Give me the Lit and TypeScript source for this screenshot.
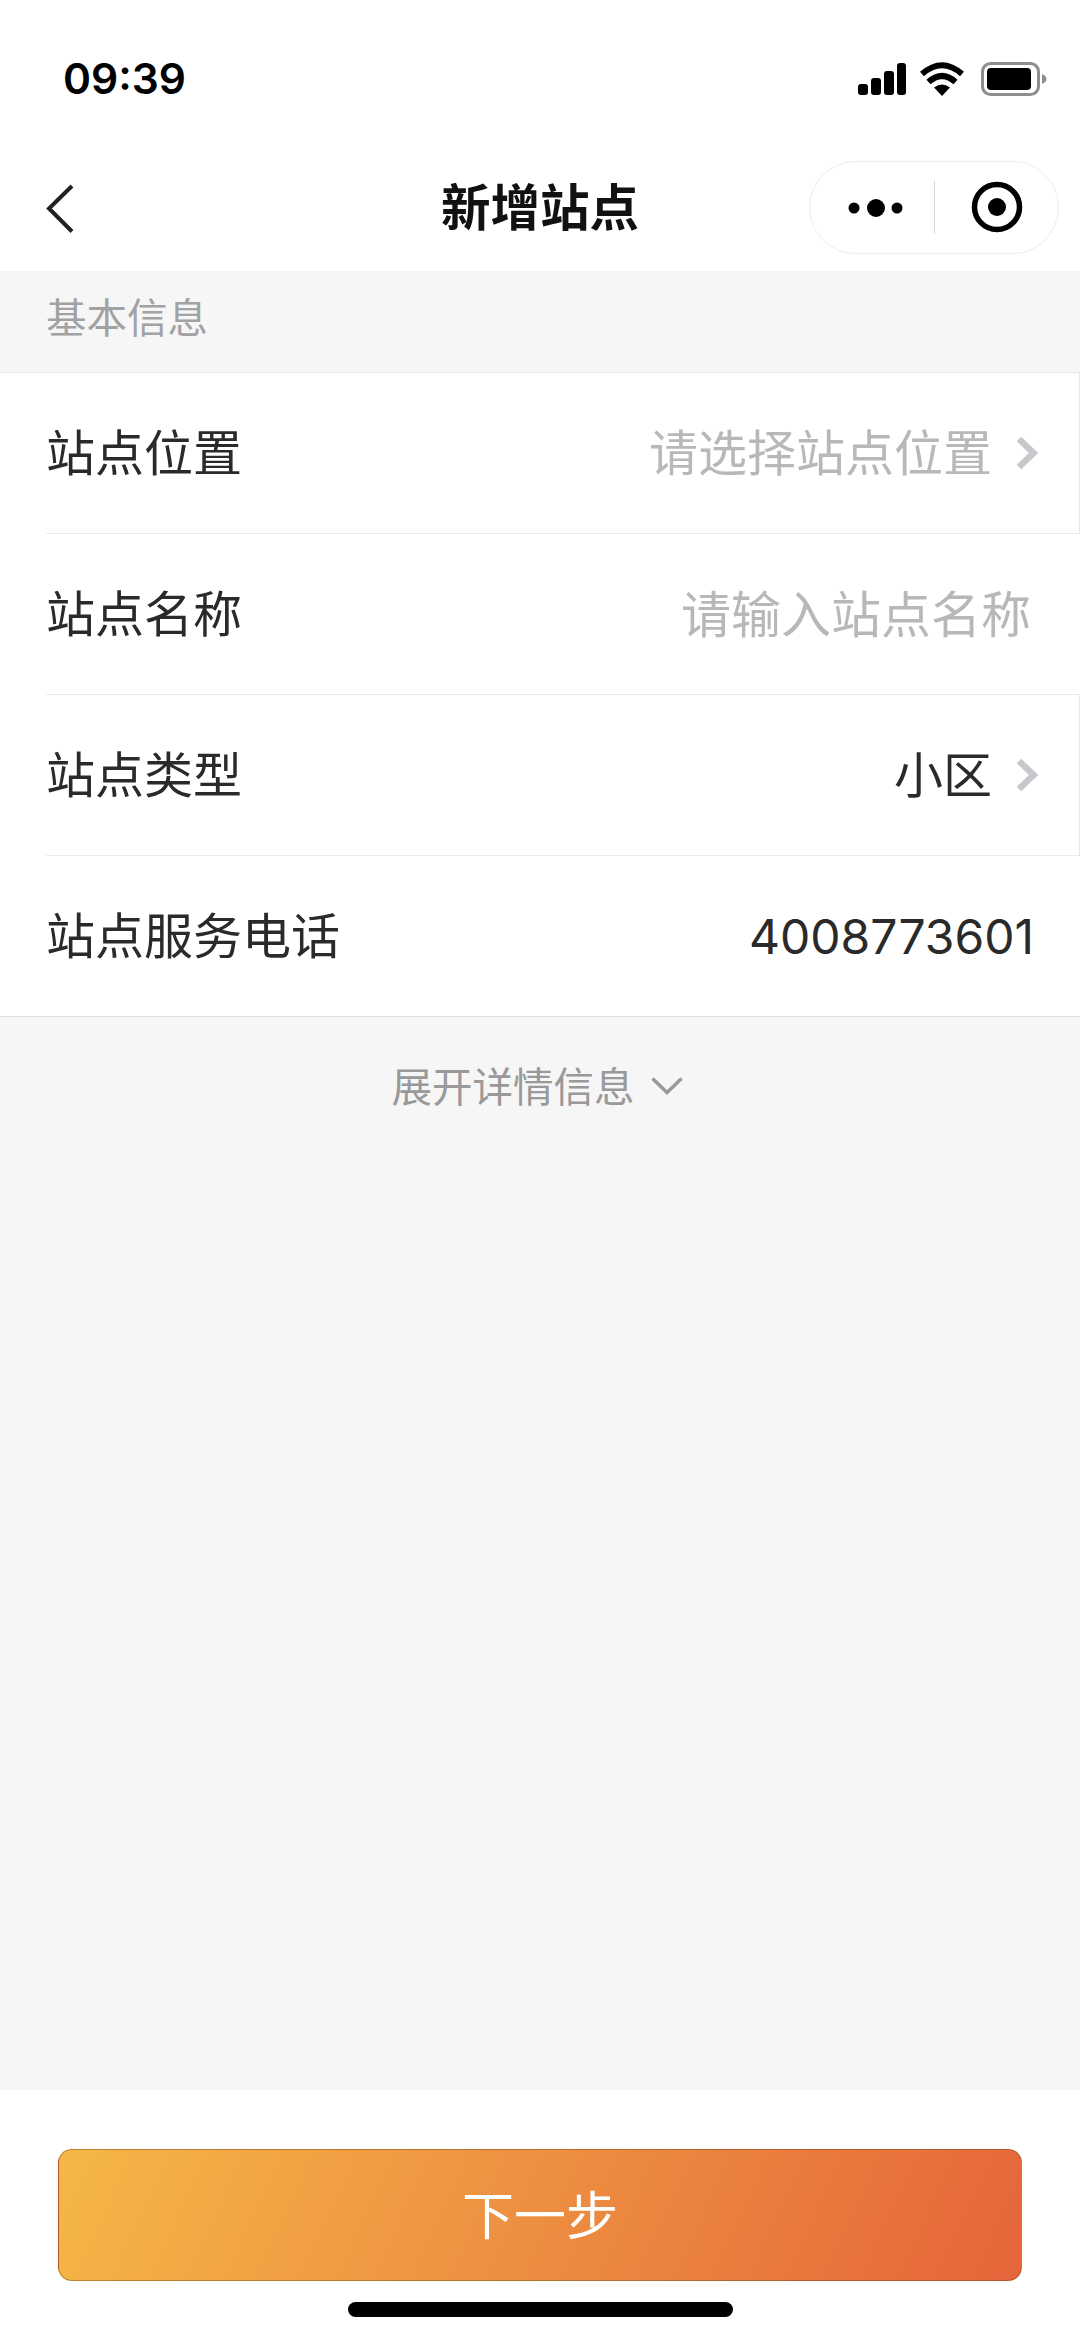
import { LitElement, html, css } from "lit";
import { customElement } from "lit/decorators.js";

const arrow = html`<svg class="arrow" width="22" height="34" viewBox="0 0 22 34"><path d="M3 3 L17.500 17 L3 31" fill="none" stroke="#c7c7cc" stroke-width="6.5"/></svg>`;

@customElement("app-root")
export class AppRoot extends LitElement {
  static styles = css`
    :host { display: block; width: 1080px; height: 2339px; background: #fff; color: #2a2a2a;
      font-family: "Noto Sans CJK SC", "Liberation Sans", sans-serif; overflow: hidden; }
    * { box-sizing: border-box; }
    .page { display: flex; flex-direction: column; height: 2339px; }
    .status { height: 161px; flex: none; display: flex; justify-content: space-between; align-items: center; padding: 0 33px 3px 63px; }
    .time { font: 600 42.500px/1 Inter, sans-serif; color: #000; }
    .sicons { display: flex; align-items: center; gap: 17px; }
    .sicons svg { display: block; }
    .sicons .signal { margin-right: -3px; }
    .nav { height: 110px; flex: none; position: relative; display: flex; align-items: center; justify-content: space-between; padding: 0 21px 18px 46px; }
    .title { position: absolute; left: 0; right: 0; top: 16px; text-align: center; font-size: 49.500px; font-weight: 700; line-height: 56px; color: #111; }
    .back { display: block; margin-top: 3px; }
    .capsule { position: relative; width: 250px; height: 93px; border: 1px solid #ededed; border-radius: 47px; display: flex; align-items: center; background: #fff; }
    .capsule .more { position: absolute; left: 38px; top: 30px; }
    .capsule .div { position: absolute; left: 124px; top: 19px; width: 1px; height: 53px; background: #d8d8d8; }
    .capsule .rec { position: absolute; left: 161px; top: 19px; }
    .body { flex: 1; background: #f6f6f6; display: flex; flex-direction: column; }
    .head { height: 101px; padding: 22px 0 0 46px; font-size: 40.500px; line-height: 46px; color: #a2a2a2; }
    .list { background: #fff; border-top: 1px solid #e8e8e8; border-bottom: 1px solid #e0e0e0; display: flex; flex-direction: column; }
    .row { height: 161px; margin-left: 46px; display: flex; align-items: center; justify-content: space-between; border-bottom: 1px solid #ebebeb; font-size: 49px; padding-right: 46px; padding-bottom: 7px; }
    .row:last-child { border-bottom: none; height: 160px; }
    .row.link { border-right: 1px solid #e6e6e6; padding-right: 41px; }
    .row.name { padding-right: 49px; }
    .row.name .ph { font-size: 50px; }
    .right { display: flex; align-items: center; gap: 24px; }
    .right .arrow { margin-top: 6px; }
    .ph { color: #b8b8b8; }
    .num { font-family: Inter, "Liberation Sans", sans-serif; font-size: 48px; color: #2a2a2a; padding-top: 8px; }
    .expand { display: flex; justify-content: center; align-items: center; gap: 16px; height: 96px; padding: 38px 6px 0 0; font-size: 40.500px; color: #999; }
    .expand svg { margin-top: 4px; }
    .footer { height: 249px; flex: none; background: #fff; padding: 59px 58px 0; position: relative; }
    .btn { height: 132px; border: 1px solid rgba(120, 70, 20, 0.45); border-radius: 14px; background: linear-gradient(115deg, #f5b747, #e5653a); color: #fff; font-size: 52px; padding-bottom: 5px; display: flex; align-items: center; justify-content: center; }
    .home { position: absolute; left: 348px; top: 212px; width: 385px; height: 15px; border-radius: 8px; background: #000; }
  `;

  render() {
    return html`<div class="page">
      <div class="status">
        <span class="time">09:39</span>
        <div class="sicons">
          <svg class="signal" width="48" height="32" viewBox="0 0 48 32"><rect x="0" y="21" width="10" height="11" rx="3"/><rect x="13" y="15" width="10" height="17" rx="3"/><rect x="26" y="8" width="10" height="24" rx="3"/><rect x="39" y="0" width="9" height="32" rx="3"/></svg>
          <svg width="44" height="34" viewBox="0 0 44 34">
            <path d="M22 34 L14 25.500 Q22 19.500 30 25.500Z"/>
            <path d="M8.500 20 Q22 8 35.500 20" fill="none" stroke="#000" stroke-width="6"/>
            <path d="M2 12 Q22 -5.500 42 12" fill="none" stroke="#000" stroke-width="6"/>
          </svg>
          <svg width="66" height="34" viewBox="0 0 66 34">
            <rect x="1.500" y="1.500" width="56" height="31" rx="8" fill="none" stroke="#8e8e8e" stroke-width="3"/>
            <rect x="6" y="6" width="44" height="22" rx="4"/>
            <path d="M61 12 Q65.500 14 65.500 17 Q65.500 20 61 22Z" fill="#8e8e8e"/>
          </svg>
        </div>
      </div>
      <div class="nav">
        <svg class="back" width="28" height="50" viewBox="0 0 28 50"><path d="M26 2 L3 24.500 L26 47.500" fill="none" stroke="#222" stroke-width="4"/></svg>
        <div class="title">新增站点</div>
        <div class="capsule">
          <svg class="more" width="56" height="32" viewBox="0 0 56 32"><circle cx="6" cy="16" r="5.500"/><circle cx="28" cy="16" r="9"/><circle cx="49" cy="16" r="5.500"/></svg>
          <div class="div"></div>
          <svg class="rec" width="52" height="52" viewBox="0 0 52 52"><circle cx="26" cy="26" r="22.500" fill="none" stroke="#000" stroke-width="5.500"/><circle cx="26" cy="26" r="9"/></svg>
        </div>
      </div>
      <div class="body">
        <div class="head">基本信息</div>
        <div class="list">
          <div class="row link"><span>站点位置</span><div class="right"><span class="ph">请选择站点位置</span>${arrow}</div></div>
          <div class="row name"><span>站点名称</span><span class="ph">请输入站点名称</span></div>
          <div class="row link"><span>站点类型</span><div class="right"><span>小区</span>${arrow}</div></div>
          <div class="row"><span>站点服务电话</span><span class="num">4008773601</span></div>
        </div>
        <div class="expand"><span>展开详情信息</span><svg width="32" height="18" viewBox="0 0 32 18"><path d="M1.500 1.500 L16 15.500 L30.500 1.500" fill="none" stroke="#999" stroke-width="3.500"/></svg></div>
      </div>
      <div class="footer">
        <div class="btn">下一步</div>
        <div class="home"></div>
      </div>
    </div>`;
  }
}
